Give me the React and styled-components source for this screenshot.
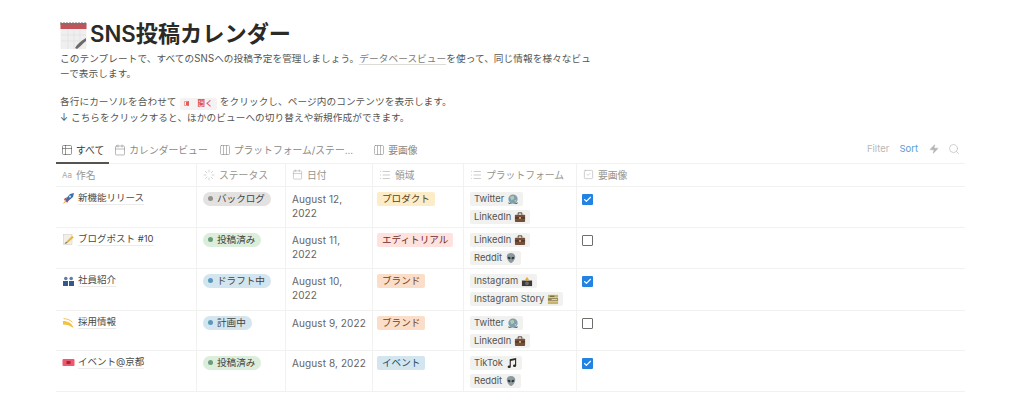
import React from "react";
import styled, { createGlobalStyle } from "styled-components";
import { Table2, Calendar, Columns3, Search, Zap, List, SquareCheck, Loader, Check } from "lucide-react";

const GlobalStyle = createGlobalStyle`
  html, body {
    margin: 0;
    height: 100%;
    overflow: hidden;
    background: #fff;
    font-family: Inter, "Noto Sans CJK JP", sans-serif;
    color: #37352f;
  }
`;

const Page = styled.div`
  width: 909px;
  padding: 18px 0 0 56px;
`;

const Header = styled.div`
  padding-left: 4px;
`;

const TitleRow = styled.div`
  display: flex;
  align-items: center;
  gap: 3px;
  height: 32px;
`;

const Title = styled.h1`
  margin: 0;
  font-size: 22.2px;
  font-weight: 600;
  line-height: 30px;
  color: #2b2a26;
`;

const Description = styled.div`
  margin-top: 1px;
  font-size: 9.65px;
  letter-spacing: 0.09px;
  line-height: 15px;
  white-space: nowrap;
  color: #55544f;
`;

const Paragraph = styled.p`
  margin: 0 0 13px;
`;

const DocLink = styled.span`
  color: #7a7974;
  border-bottom: 1px solid #dcdbd8;
`;

const OpenButton = styled.span`
  display: inline-flex;
  align-items: center;
  gap: 9px;
  height: 12px;
  padding: 0 4px;
  margin: 0 3px;
  background: #f4f3f1;
  border-radius: 2px;
  color: #dd4b4b;
  font-size: 7.5px;
  font-weight: 600;
  vertical-align: -1px;
`;

const OpenMark = styled.i`
  width: 5px;
  height: 5px;
  border: 1px solid #f0a3a3;
  border-right: 3px solid #e25c5c;
  box-sizing: border-box;
`;

const Toolbar = styled.div`
  display: flex;
  align-items: flex-end;
  justify-content: space-between;
  margin-top: 9px;
  height: 29px;
  border-bottom: 1px solid #f1f1ef;
`;

const Tabs = styled.div`
  display: flex;
  align-items: flex-end;
`;

const Tab = styled.div`
  display: flex;
  align-items: center;
  gap: 3px;
  box-sizing: border-box;
  height: 26px;
  margin-bottom: -1px;
  padding: 0 ${(p) => (p.$active ? "5px" : "6px")} 0 5px;
  margin-right: ${(p) => p.$gap || 0}px;
  font-size: 9.8px;
  white-space: nowrap;
  color: ${(p) => (p.$active ? "#3c3b36" : "#8b8a86")};
  border-bottom: 2px solid ${(p) => (p.$active ? "#55544f" : "transparent")};
`;

const Actions = styled.div`
  display: flex;
  align-items: center;
  height: 28px;
  padding-right: 5px;
  box-sizing: border-box;
  font-size: 9.5px;
  color: #b4b3b0;
`;

const Action = styled.span`
  margin-right: ${(p) => p.$gap || 0}px;
  color: ${(p) => p.$color || "#b9b8b5"};
  display: flex;
  align-items: center;
`;

const Row = styled.div`
  display: grid;
  grid-template-columns: 141px 89px 87px 91px 113px 388px;
  height: ${(p) => p.$height}px;
  box-sizing: border-box;
  border-bottom: 1px solid #f1f1ef;
`;

const HeadCell = styled.div`
  display: flex;
  align-items: center;
  gap: 4px;
  padding-left: ${(p) => p.$pad || 6}px;
  font-size: 9.8px;
  color: #96958f;
  white-space: nowrap;
  border-right: ${(p) => (p.$last ? "none" : "1px solid #f1f1ef")};
`;

const AaMark = styled.span`
  font-size: 8px;
  color: #aaa9a5;
`;

const Cell = styled.div`
  display: flex;
  flex-direction: column;
  align-items: flex-start;
  gap: ${(p) => p.$gap || 0}px;
  box-sizing: border-box;
  padding: 5px 0 0 ${(p) => p.$pad || 6}px;
  border-right: ${(p) => (p.$last ? "none" : "1px solid #f1f1ef")};
`;

const NameLine = styled.div`
  display: flex;
  align-items: center;
  gap: 3px;
  height: 14px;
  font-size: 9.5px;
  color: #4a4944;
  white-space: nowrap;
`;

const NameText = styled.span`
  border-bottom: 1px solid #ecebe9;
  line-height: 12px;
`;

const StatusPill = styled.span`
  display: inline-flex;
  align-items: center;
  gap: 4px;
  box-sizing: border-box;
  height: 14px;
  padding: 0 6px 1px 5px;
  border-radius: 7px;
  font-size: 9.6px;
  white-space: nowrap;
  color: #45443f;
  background: ${(p) => p.$bg};
`;

const Dot = styled.i`
  width: 5px;
  height: 5px;
  border-radius: 50%;
  background: ${(p) => p.$color};
`;

const DateText = styled.div`
  width: 76px;
  font-size: 10px;
  line-height: 14.5px;
  letter-spacing: 0.1px;
  color: #66655f;
`;

const Tag = styled.span`
  display: inline-flex;
  align-items: center;
  box-sizing: border-box;
  height: 14px;
  padding: 0 5px 1px;
  border-radius: 2px;
  font-size: 9.6px;
  white-space: nowrap;
  color: ${(p) => p.$color};
  background: ${(p) => p.$bg};
`;

const PlatformTag = styled.span`
  display: inline-flex;
  align-items: center;
  gap: 3px;
  height: 14px;
  padding: 0 4px;
  border-radius: 2px;
  font-size: 9.4px;
  white-space: nowrap;
  color: #55544f;
  background: #f1f1ef;
`;

const CheckBox = styled.span`
  display: flex;
  align-items: center;
  justify-content: center;
  margin-top: 2px;
  box-sizing: border-box;
  width: 11px;
  height: 11px;
  border-radius: 1px;
  color: #fff;
  background: ${(p) => (p.$on ? "#2383e2" : "#fff")};
  border: ${(p) => (p.$on ? "none" : "1.3px solid #6f6e69")};
`;

const Glyph = styled.svg`
  flex: none;
  display: block;
`;

const emojiParts = {
  rocket: (
    <>
      <path d="M3 8 L8 2 L12 1 L11 5 L5 10 Z" fill="#3f6fa8" />
      <circle cx="8" cy="4.600" r="1.100" fill="#c9dcf2" />
      <path d="M2 7 L5 5 L3 9 Z M5 11 L7 8 L4 9 Z" fill="#d8413a" />
      <path d="M0.500 12 L3.500 8.500 L4 10 Z" fill="#f5a623" />
    </>
  ),
  memo: (
    <>
      <rect x="1.500" y="1.500" width="8.500" height="10" fill="#f1efe8" stroke="#c9c7c0" strokeWidth="0.5" />
      <path d="M4 9 L10 3 L11.800 4.200 L5.500 10 Z" fill="#e8b431" />
      <path d="M2.500 10.800 L4 9 L5.500 10 Z" fill="#5a4a30" />
    </>
  ),
  busts: (
    <>
      <circle cx="3.800" cy="4.500" r="1.800" fill="#5f7fa6" />
      <circle cx="9.200" cy="4.500" r="1.800" fill="#5f7fa6" />
      <path d="M1 12 V7 H6 V12 Z M7 12 V7 H12 V12 Z" fill="#34598c" />
    </>
  ),
  dizzy: (
    <>
      <path d="M1 5 C6 5 10 7 11.500 12 C8 9.500 5 8.500 1 8.500 Z" fill="#f3c33c" />
      <path d="M1.500 2.600 C5 2.800 8.500 4 10.500 6.400" stroke="#e8b431" strokeWidth="0.8" fill="none" />
    </>
  ),
  ticket: (
    <>
      <rect x="0.500" y="3" width="12" height="7" rx="1" fill="#ec5a70" />
      <rect x="4.500" y="5" width="4" height="3" fill="#a8253a" />
    </>
  ),
  globe: (
    <>
      <circle cx="6.500" cy="6.500" r="5" fill="#7f9fb0" />
      <path d="M3 4 L7 3 L8 6 L5 8 Z M8 8 L10.500 7 L9 10 Z" fill="#b4c9b0" />
      <path d="M1 10 L6 12 L12 10 L11 12 H2 Z" fill="#6d6c67" />
    </>
  ),
  briefcase: (
    <>
      <path d="M4.500 4 V2 H8.500 V4" stroke="#4d3526" strokeWidth="1" fill="none" />
      <rect x="1" y="4" width="11" height="8" rx="0.8" fill="#74503a" />
      <rect x="1" y="7" width="11" height="1" fill="#3f2a1e" />
      <rect x="5.500" y="6.500" width="2" height="2" fill="#d4b483" />
    </>
  ),
  alien: (
    <>
      <path d="M6.500 1 C10 1 11.500 3.500 11 6 C10.500 9 8 12 6.500 12 C5 12 2.500 9 2 6 C1.500 3.500 3 1 6.500 1 Z" fill="#8b9a9e" />
      <ellipse cx="4.500" cy="6.500" rx="1.600" ry="1.100" fill="#2f3537" transform="rotate(25 4.500 6.500)" />
      <ellipse cx="8.500" cy="6.500" rx="1.600" ry="1.100" fill="#2f3537" transform="rotate(-25 8.500 6.500)" />
    </>
  ),
  camera: (
    <>
      <rect x="1" y="6" width="11" height="6" fill="#3a3a3a" />
      <circle cx="6.500" cy="9" r="2" fill="#6b6b6b" />
      <path d="M4 6 L6.500 2 L9 6 Z" fill="#e8a93a" />
    </>
  ),
  film: (
    <>
      <rect x="1" y="2" width="11" height="3" fill="#c9b26a" />
      <rect x="1" y="5.500" width="11" height="3" fill="#8d8450" />
      <rect x="1" y="9" width="11" height="3" fill="#c9b26a" />
      <rect x="3" y="3" width="5" height="1" fill="#5a5233" />
      <rect x="5" y="6.500" width="6" height="1" fill="#e8dfa8" />
    </>
  ),
  note: (
    <path
      d="M4 2.500 L11 1 V9.500 A1.700 1.400 0 1 1 9.800 8.200 V3.300 L5.200 4.300 V10.500 A1.700 1.400 0 1 1 4 9.200 Z"
      fill="#2b2a26"
    />
  ),
};

const Emoji = ({ name, size = 13 }) => (
  <Glyph width={size} height={size} viewBox="0 0 13 13">
    {emojiParts[name]}
  </Glyph>
);

const CalendarArt = () => (
  <Glyph width="27" height="29" viewBox="0 0 27 29">
    <rect x="0.500" y="3" width="26" height="26" rx="1" fill="#efefef" />
    <rect x="0.500" y="3" width="26" height="6" fill="#c4525a" />
    <path d="M1 2 V5 M4 2 V5 M7 2 V5 M10 2 V5 M13 2 V5 M16 2 V5 M19 2 V5 M22 2 V5 M25 2 V5" stroke="#777" strokeWidth="1" />
    <path d="M8 10 V29 M14 10 V29 M20 10 V29 M1 15 H26 M1 21 H26" stroke="#e1e1e1" strokeWidth="0.7" />
    <path d="M15 28 C17 24 21 21 26 18 L26 21 C22 24 20 27 17 29 Z" fill="#6b6b6b" />
  </Glyph>
);

const rows = [
  {
    emoji: "rocket", name: "新機能リリース", status: "バックログ", date: "August 12, 2022",
    area: ["プロダクト", "#fdecc8", "#5a4216"],
    platforms: [["Twitter", "globe"], ["LinkedIn", "briefcase"]], checked: true, height: 41,
  },
  {
    emoji: "memo", name: "ブログポスト #10", status: "投稿済み", date: "August 11, 2022",
    area: ["エディトリアル", "#ffe2dd", "#6e2b25"],
    platforms: [["LinkedIn", "briefcase"], ["Reddit", "alien"]], checked: false, height: 41,
  },
  {
    emoji: "busts", name: "社員紹介", status: "ドラフト中", date: "August 10, 2022",
    area: ["ブランド", "#fadec9", "#6b4024"],
    platforms: [["Instagram", "camera"], ["Instagram Story", "film"]], checked: true, height: 42,
  },
  {
    emoji: "dizzy", name: "採用情報", status: "計画中", date: "August 9, 2022",
    area: ["ブランド", "#fadec9", "#6b4024"],
    platforms: [["Twitter", "globe"], ["LinkedIn", "briefcase"]], checked: false, height: 40,
  },
  {
    emoji: "ticket", name: "イベント@京都", status: "投稿済み", date: "August 8, 2022",
    area: ["イベント", "#d3e5ef", "#234a60"],
    platforms: [["TikTok", "note"], ["Reddit", "alien"]], checked: true, height: 41,
  },
];

const statusColors = {
  バックログ: ["#e3e2e0", "#91918e"],
  投稿済み: ["#dbeddb", "#6c9b7d"],
  ドラフト中: ["#d3e5ef", "#5b97bd"],
  計画中: ["#d3e5ef", "#5b97bd"],
};

const iconProps = { size: 12, strokeWidth: 1.2 };

const App = () => (
  <>
    <GlobalStyle />
    <Page>
      <Header>
        <TitleRow>
          <CalendarArt />
          <Title>SNS投稿カレンダー</Title>
        </TitleRow>
        <Description>
          <Paragraph>
            このテンプレートで、すべてのSNSへの投稿予定を管理しましょう。
            <DocLink>データベースビュー</DocLink>を使って、同じ情報を様々なビュ
            <br />
            ーで表示します。
          </Paragraph>
          <div>
            各行にカーソルを合わせて
            <OpenButton>
              <OpenMark />
              開く
            </OpenButton>
            をクリックし、ページ内のコンテンツを表示します。
          </div>
          <div>↓ こちらをクリックすると、ほかのビューへの切り替えや新規作成ができます。</div>
        </Description>
      </Header>

      <Toolbar>
        <Tabs>
          <Tab $active>
            <Table2 {...iconProps} color="#55544f" />
            すべて
          </Tab>
          <Tab>
            <Calendar {...iconProps} />
            カレンダービュー
          </Tab>
          <Tab $gap={9}>
            <Columns3 {...iconProps} />
            プラットフォーム/ステー...
          </Tab>
          <Tab>
            <Columns3 {...iconProps} />
            要画像
          </Tab>
        </Tabs>
        <Actions>
          <Action $gap={10}>Filter</Action>
          <Action $gap={11} $color="#5b9bd5">Sort</Action>
          <Action $gap={9}><Zap size={10} strokeWidth={1.5} fill="#b4b3b0" /></Action>
          <Action><Search size={12} strokeWidth={1.3} /></Action>
        </Actions>
      </Toolbar>

      <Row $height={23}>
        <HeadCell>
          <AaMark>Aa</AaMark>
          作名
        </HeadCell>
        <HeadCell>
          <Loader size={12} strokeWidth={1} color="#aaa9a5" />
          ステータス
        </HeadCell>
        <HeadCell>
          <Calendar size={11} strokeWidth={1.2} color="#aaa9a5" />
          日付
        </HeadCell>
        <HeadCell>
          <List size={12} strokeWidth={1.2} color="#aaa9a5" />
          領域
        </HeadCell>
        <HeadCell>
          <List size={12} strokeWidth={1.2} color="#aaa9a5" />
          プラットフォーム
        </HeadCell>
        <HeadCell $last>
          <SquareCheck size={11} strokeWidth={1.2} color="#aaa9a5" />
          要画像
        </HeadCell>
      </Row>

      {rows.map((row) => {
        const [statusBg, statusDot] = statusColors[row.status];
        return (
          <Row key={row.name} $height={row.height}>
            <Cell>
              <NameLine>
                <Emoji name={row.emoji} />
                <NameText>{row.name}</NameText>
              </NameLine>
            </Cell>
            <Cell>
              <StatusPill $bg={statusBg}>
                <Dot $color={statusDot} />
                {row.status}
              </StatusPill>
            </Cell>
            <Cell>
              <DateText>{row.date}</DateText>
            </Cell>
            <Cell $pad={4}>
              <Tag $bg={row.area[1]} $color={row.area[2]}>{row.area[0]}</Tag>
            </Cell>
            <Cell $gap={4}>
              {row.platforms.map(([label, icon]) => (
                <PlatformTag key={label}>
                  {label}
                  <Emoji name={icon} size={12} />
                </PlatformTag>
              ))}
            </Cell>
            <Cell $last $pad={5}>
              <CheckBox $on={row.checked}>
                {row.checked && <Check size={9} strokeWidth={3} />}
              </CheckBox>
            </Cell>
          </Row>
        );
      })}
    </Page>
  </>
);

export default App;
